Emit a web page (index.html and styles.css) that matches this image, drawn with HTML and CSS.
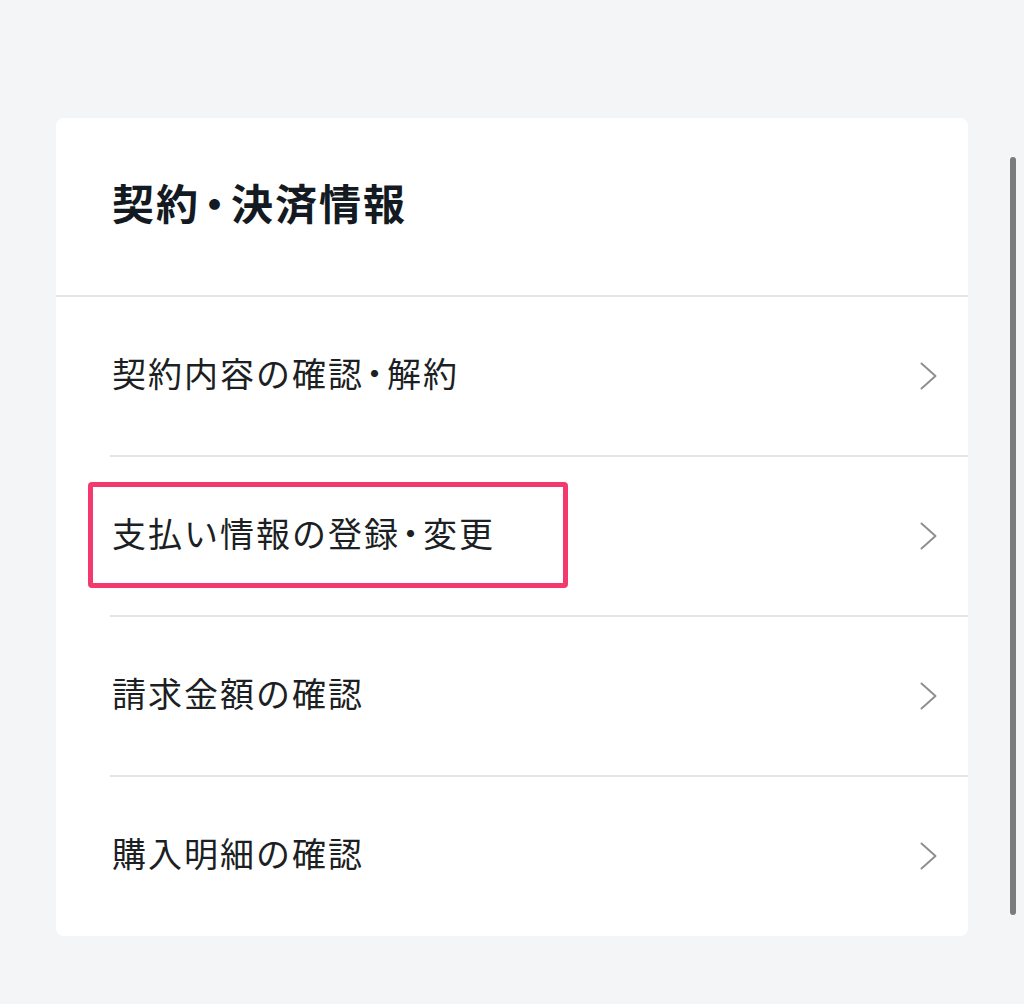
FILE: index.html
```html
<!DOCTYPE html>
<html lang="ja">
<head>
    <meta charset="UTF-8">
    <meta name="viewport" content="width=device-width, initial-scale=1.0">
    <title>契約・決済情報</title>
    <link rel="stylesheet" href="styles.css">
</head>
<body>

<div class="page">
    <section class="card">
        <header class="card-header">
            <h2>契約<span class="dot">・</span>決済情報</h2>
        </header>
        <ul class="menu">
            <li class="menu-item">
                <a href="#" class="menu-link">
                    <span class="label">契約内容の確認<span class="dot">・</span>解約</span>
                    <svg class="chevron" width="17" height="28" viewBox="0 0 17 28"><polyline points="1.5,1.5 15.5,14 1.5,26.5" /></svg>
                </a>
            </li>
            <li class="menu-item">
                <a href="#" class="menu-link">
                    <span class="label highlight">支払い情報の登録<span class="dot">・</span>変更</span>
                    <svg class="chevron" width="17" height="28" viewBox="0 0 17 28"><polyline points="1.5,1.5 15.5,14 1.5,26.5" /></svg>
                </a>
            </li>
            <li class="menu-item">
                <a href="#" class="menu-link">
                    <span class="label">請求金額の確認</span>
                    <svg class="chevron" width="17" height="28" viewBox="0 0 17 28"><polyline points="1.5,1.5 15.5,14 1.5,26.5" /></svg>
                </a>
            </li>
            <li class="menu-item">
                <a href="#" class="menu-link">
                    <span class="label">購入明細の確認</span>
                    <svg class="chevron" width="17" height="28" viewBox="0 0 17 28"><polyline points="1.5,1.5 15.5,14 1.5,26.5" /></svg>
                </a>
            </li>
        </ul>
    </section>
    <div class="scrollbar"></div>
</div>

</body>
</html>
```

FILE: styles.css
```css
body, html {
    margin: 0;
    padding: 0;
    background-color: #f3f5f7;
    font-family: "Noto Sans CJK JP", "Noto Sans", sans-serif;
}
.page {
    position: relative;
    height: 1004px;
    padding: 118px 0 0 56px;
    box-sizing: border-box;
}
.card {
    width: 912px;
    height: 818px;
    background-color: #fff;
    border-radius: 8px;
    overflow: hidden;
}
.card-header {
    height: 179px;
    display: flex;
    align-items: center;
    padding-left: 56px;
    padding-bottom: 10px;
    box-sizing: border-box;
    border-bottom: 2px solid #e4e5e7;
}
.card-header h2 {
    margin: 0;
    font-size: 42px;
    line-height: 56px;
    font-weight: bold;
    color: #141a22;
    letter-spacing: 2px;
}
/* proportional middle dot, as in the app */
.dot {
    font-feature-settings: "palt";
    margin: 0 2px;
}
.card-header .dot {
    margin: 0 4px;
}
.menu {
    list-style: none;
    margin: 0;
    padding: 0;
}
.menu-item {
    margin-left: 54px;
    border-bottom: 2px solid #e4e5e7;
}
.menu-item:last-child {
    border-bottom: none;
}
.menu-link {
    height: 158px;
    display: flex;
    align-items: center;
    justify-content: space-between;
    padding: 0 31px 0 2px;
    text-decoration: none;
    color: #1c1f24;
}
.label {
    position: relative;
    top: -3px;
    font-size: 34px;
    line-height: 48px;
    font-weight: 400;
    letter-spacing: 2px;
}
/* pink annotation box round the second row */
.highlight::after {
    content: '';
    position: absolute;
    top: -27px;
    bottom: -31px;
    left: -24px;
    right: -73px;
    border: 5px solid #f23a6f;
    border-radius: 4px;
}
.chevron polyline {
    fill: none;
    stroke: #8d8f92;
    stroke-width: 2;
    stroke-linecap: round;
    stroke-linejoin: round;
}
.scrollbar {
    position: absolute;
    top: 157px;
    left: 1010px;
    width: 6px;
    height: 758px;
    border-radius: 3px;
    background-color: #7b7c7e;
}
```
